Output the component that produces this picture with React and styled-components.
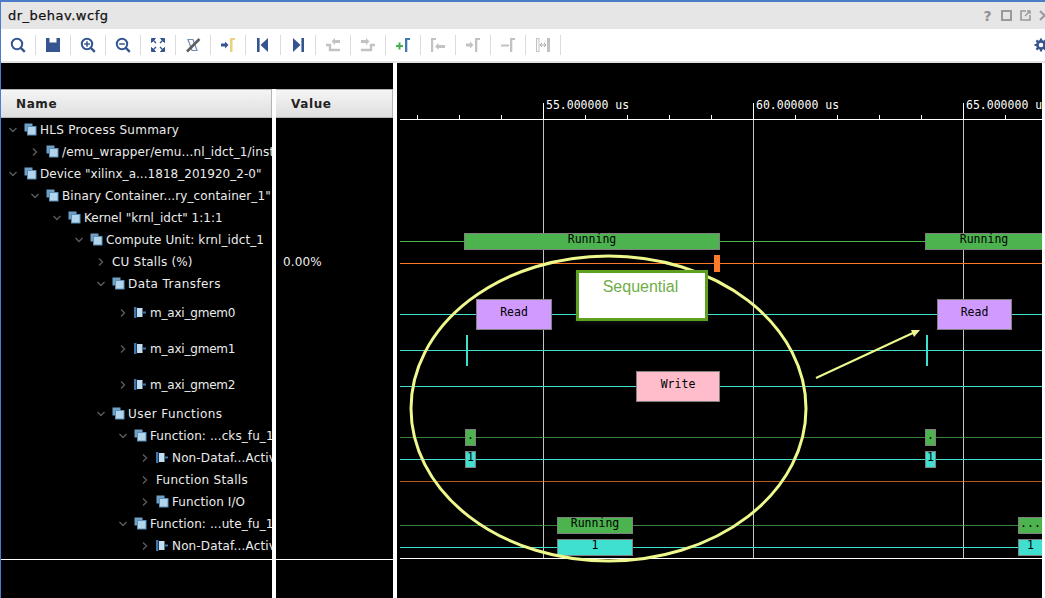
import styled, { createGlobalStyle } from "styled-components";

const GlobalStyle = createGlobalStyle`
  html, body { margin: 0; padding: 0; background: #fff; }
  body { font-family: "DejaVu Sans", sans-serif; }
`;

const blue = "#34558f";
const off = "#c2c2c2";

const Frame = styled.div`
  width: 1045px;
  height: 598px;
  box-sizing: border-box;
  border-top: 2px solid #4a7cc9;
  border-left: 1px solid #4a7cc9;
  background: #fff;
  overflow: hidden;
  display: flex;
  flex-direction: column;
`;

const TitleBar = styled.div`
  height: 27px;
  flex: none;
  background: #e6e6e6;
  display: flex;
  align-items: center;
  justify-content: space-between;
  padding-left: 7px;
`;

const Title = styled.span`
  font-size: 13px;
  letter-spacing: 0.5px;
  color: #111;
  -webkit-text-stroke: 0.25px #111;
`;

const WindowButtons = styled.div`
  display: flex;
  margin-right: -9px;
`;

const WindowButton = styled.div`
  width: 19px;
  height: 19px;
  display: flex;
  align-items: center;
  justify-content: center;
  color: #8f8f8f;
  font-size: 14px;
  font-weight: bold;
`;

const Toolbar = styled.div`
  height: 32px;
  flex: none;
  background: #fff;
  display: flex;
  align-items: center;
  justify-content: space-between;
  border-bottom: 2px solid #e4e4e4;
  box-sizing: content-box;
`;

const ToolGroup = styled.div`
  display: flex;
  align-items: center;
`;

const ToolCell = styled.div`
  width: 35px;
  height: 20px;
  box-sizing: border-box;
  border-right: 1px solid #dcdcdc;
  display: flex;
  align-items: center;
  justify-content: center;
`;

const Gear = styled.svg`
  width: 14px;
  height: 14px;
  margin-right: -3px;
`;

const Body = styled.div`
  flex: 1;
  min-height: 0;
  display: flex;
  gap: 4px;
`;

const LeftPane = styled.div`
  width: 392px;
  flex: none;
  display: flex;
  flex-direction: column;
`;

const BlackStrip = styled.div`
  height: 26px;
  flex: none;
  background: #000;
`;

const Columns = styled.div`
  flex: 1;
  display: grid;
  grid-template-columns: 271px 117px;
  gap: 4px;
`;

const Column = styled.div`
  background: #000;
  display: flex;
  flex-direction: column;
  overflow: hidden;
`;

const ColumnHeader = styled.div`
  height: 29px;
  flex: none;
  box-sizing: border-box;
  padding-left: 15px;
  display: flex;
  align-items: center;
  background: linear-gradient(#f5f5f5, #dedede);
  border: 1px solid #b4b4b4;
  border-left: none;
  font-size: 12px;
  font-weight: bold;
  letter-spacing: 0.6px;
  color: #222;
`;

const Rows = styled.div`
  flex: none;
`;

const TreeRow = styled.div`
  height: ${({ $h }) => $h}px;
  box-sizing: border-box;
  padding-left: ${({ $level }) => 7 + $level * 22}px;
  display: flex;
  align-items: center;
  white-space: nowrap;
  font-size: 12px;
  color: #ececec;
`;

const RowLabel = styled.span`
  padding-top: 2px;
  letter-spacing: ${({ $track }) => $track}px;
`;

const ValueRow = styled.div`
  height: ${({ $h }) => $h}px;
  box-sizing: border-box;
  padding: 2px 0 0 7px;
  display: flex;
  align-items: center;
  font-size: 12px;
  letter-spacing: 0.15px;
  color: #ececec;
`;

const Chevron = styled.svg`
  width: 10px;
  height: 10px;
  flex: none;
  margin-right: 6px;
  margin-top: 2px;
`;

const NodeIcon = styled.svg`
  width: 13px;
  height: 13px;
  flex: none;
  margin-right: 3px;
`;

const FootLine = styled.div`
  margin-top: 3px;
  height: 1px;
  background: #fff;
  flex: none;
`;

const Wave = styled.div`
  position: relative;
  width: 645px;
  flex: none;
  background: #000;
  overflow: hidden;
  font-family: "DejaVu Sans Mono", monospace;
  font-size: 11.5px;
`;

const Ruler = styled.div`
  position: relative;
  height: 57px;
  margin-left: 3px;
  border-bottom: 1px solid #fff;
  box-sizing: border-box;
`;

const Tick = styled.div`
  position: absolute;
  bottom: 0;
  left: ${({ $x }) => $x - 400}px;
  width: 1px;
  height: ${({ $major }) => ($major ? 16 : 4)}px;
  background: #fff;
`;

const TickLabel = styled.span`
  position: absolute;
  top: 35px;
  left: ${({ $x }) => $x - 397}px;
  color: #fff;
  white-space: nowrap;
`;

const GridLine = styled.div`
  position: absolute;
  top: 57px;
  height: 438px;
  left: ${({ $x }) => $x - 397}px;
  width: 1px;
  background: #c4c4c4;
`;

const WaveRow = styled.div`
  position: relative;
  height: ${({ $h }) => $h}px;
`;

const Trace = styled.div`
  position: absolute;
  left: 3px;
  right: 0;
  top: 50%;
  height: 1px;
  background: ${({ $color }) => $color};
  opacity: ${({ $dim }) => ($dim ? 0.72 : 1)};
`;

const Bar = styled.div`
  position: absolute;
  left: ${({ $x }) => $x - 397}px;
  width: ${({ $w }) => $w}px;
  top: 3px;
  bottom: 2px;
  box-sizing: border-box;
  border: 1px solid #808080;
  background: ${({ $color }) => $color};
  color: #000;
  display: flex;
  justify-content: center;
  align-items: center;
  padding-bottom: 5px;
  white-space: nowrap;
`;

const Marker = styled.div`
  position: absolute;
  left: ${({ $x }) => $x - 397}px;
  width: ${({ $w }) => $w}px;
  top: 3px;
  bottom: 2px;
  background: ${({ $color }) => $color};
`;

const BottomLine = styled.div`
  height: 1px;
  margin-left: 3px;
  background: #fff;
  position: relative;
`;

const Overlay = styled.svg`
  position: absolute;
  left: 0;
  top: 0;
  width: 648px;
  height: 535px;
  pointer-events: none;
`;

const Callout = styled.div`
  position: absolute;
  left: 179px;
  top: 207px;
  width: 132px;
  height: 51px;
  box-sizing: border-box;
  border: 3px solid #5ea122;
  background: #fff;
  box-shadow: 0 2px 4px rgba(255, 255, 255, 0.08);
  text-align: center;
  font-family: "Liberation Sans", Arial, sans-serif;
  font-size: 16px;
  line-height: 20px;
  padding-top: 4px;
  padding-right: 3px;
  color: #70ad47;
`;

const Arrow = () => (
  <>
    <rect x="1" y="6.5" width="4" height="3" />
    <polygon points="5,4.5 8.5,8 5,11.5" />
  </>
);

const toolIcons = [
  <g key="search" fill="none" stroke={blue}>
    <circle cx="7" cy="7" r="5.2" strokeWidth="2" />
    <path d="M10.8 10.8L14.8 14.8" strokeWidth="2.4" />
  </g>,
  <path key="save" fill={blue} d="M1 1H4.5V5.5H11.5V1H15V15H1Z" />,
  <g key="in" fill="none" stroke={blue}>
    <circle cx="7" cy="7" r="5.2" strokeWidth="2" />
    <path d="M10.8 10.8L14.8 14.8" strokeWidth="2.4" />
    <path d="M4.2 7H9.8M7 4.2V9.8" strokeWidth="1.5" />
  </g>,
  <g key="out" fill="none" stroke={blue}>
    <circle cx="7" cy="7" r="5.2" strokeWidth="2" />
    <path d="M10.8 10.8L14.8 14.8" strokeWidth="2.4" />
    <path d="M4.2 7H9.8" strokeWidth="1.5" />
  </g>,
  <g key="fit" fill={blue} stroke={blue}>
    <path d="M1.5 1.5H5.5L1.5 5.5Z" />
    <path d="M14.5 1.5H10.5L14.5 5.5Z" />
    <path d="M1.5 14.5H5.5L1.5 10.5Z" />
    <path d="M14.5 14.5H10.5L14.5 10.5Z" />
    <path d="M3 3L6 6M13 3L10 6M3 13L6 10M13 13L10 10" strokeWidth="1.4" />
  </g>,
  <g key="snap" fill="none">
    <path d="M3 2.5H8L12 13.5H7Z" stroke="#6f8db8" strokeWidth="1.2" />
    <path d="M2 14.5L14.5 2" stroke="#5f5f5f" strokeWidth="2.6" />
  </g>,
  <g key="marker">
    <g fill={blue}>
      <Arrow />
    </g>
    <path d="M10 1H15V3H12.5V15H10Z" fill="#eed27a" />
  </g>,
  <g key="first" fill={blue}>
    <rect x="2" y="1" width="2.6" height="14" />
    <polygon points="13,1 13,15 5.5,8" />
  </g>,
  <g key="last" fill={blue}>
    <polygon points="3,1 3,15 10.5,8" />
    <rect x="11.4" y="1" width="2.6" height="14" />
  </g>,
  <g key="prevt" fill={off}>
    <path d="M1 8H5V13H15" fill="none" stroke={off} strokeWidth="2.4" />
    <rect x="10" y="3" width="5" height="3" />
    <polygon points="10,1 10,8 6.5,4.5" />
  </g>,
  <g key="nextt" fill={off}>
    <path d="M1 13H11V8H15" fill="none" stroke={off} strokeWidth="2.4" />
    <rect x="1" y="3" width="5" height="3" />
    <polygon points="6,1 6,8 9.5,4.5" />
  </g>,
  <g key="add">
    <path d="M1 9H8M4.5 5.5V12.5" fill="none" stroke="#45b04a" strokeWidth="2" />
    <path d="M10 1H15V3H12.3V15H10Z" fill="#3d7ab0" />
  </g>,
  <g key="prevm" fill={off}>
    <path d="M1 1H6V3H3.2V15H1Z" />
    <polygon points="5,9.5 8.5,6 8.5,8 15,8 15,11 8.5,11 8.5,13" />
  </g>,
  <g key="nextm" fill={off}>
    <Arrow />
    <path d="M10 1H15V3H12.3V15H10Z" />
  </g>,
  <g key="delm" fill={off}>
    <rect x="1" y="7.5" width="8" height="2" />
    <path d="M10 1H15V3H12.3V15H10Z" />
  </g>,
  <g key="span" fill={off}>
    <rect x="1.5" y="1.5" width="2.5" height="13" fill="none" stroke={off} />
    <rect x="12" y="1" width="3" height="14" />
    <path d="M5 8H11" stroke="#aaa" />
    <path d="M7 6L5 8L7 10M9 6L11 8L9 10" fill="none" stroke="#aaa" />
  </g>,
];

const GroupIcon = () => (
  <NodeIcon viewBox="0 0 13 13">
    <rect x="0.5" y="0.5" width="8" height="8" fill="#6f9fc4" />
    <rect x="3.5" y="3.5" width="8.5" height="8.5" fill="#b3d5ec" stroke="#5b8fb8" strokeWidth="1" />
  </NodeIcon>
);

const SignalIcon = () => (
  <NodeIcon viewBox="0 0 13 13">
    <rect x="0" y="1" width="2.5" height="11" fill="#3f75ad" />
    <rect x="3" y="2" width="5.5" height="9" fill="#c3def0" />
    <rect x="8.5" y="5.5" width="3.5" height="2" fill="#3f75ad" />
  </NodeIcon>
);

const ChevronIcon = ({ open }) => (
  <Chevron viewBox="0 0 10 10">
    <path
      d={open ? "M1.5 3L5 6.5L8.5 3" : "M3 1.5L6.5 5L3 8.5"}
      fill="none"
      stroke="#5a5a5a"
      strokeWidth="1.4"
    />
  </Chevron>
);

// track: the reference font has whole-pixel advances, so each label gets its own spacing
const tree = [
  { level: 0, open: true, icon: "group", track: 0.25, label: "HLS Process Summary" },
  { level: 1, icon: "group", track: 0.15, label: "/emu_wrapper/emu...nl_idct_1/inst" },
  { level: 0, open: true, icon: "group", track: 0.03, label: 'Device "xilinx_a...1818_201920_2-0"' },
  { level: 1, open: true, icon: "group", track: 0.1, label: 'Binary Container...ry_container_1"' },
  { level: 2, open: true, icon: "group", track: 0.02, label: 'Kernel "krnl_idct" 1:1:1' },
  { level: 3, open: true, icon: "group", track: 0.11, label: "Compute Unit: krnl_idct_1" },
  { level: 4, track: 0.2, label: "CU Stalls (%)", value: "0.00%" },
  { level: 4, open: true, icon: "group", track: 0.42, label: "Data Transfers" },
  { level: 5, h: 36, icon: "signal", track: -0.2, label: "m_axi_gmem0" },
  { level: 5, h: 36, icon: "signal", track: -0.2, label: "m_axi_gmem1" },
  { level: 5, h: 36, icon: "signal", track: -0.2, label: "m_axi_gmem2" },
  { level: 4, open: true, icon: "group", track: 0.42, label: "User Functions" },
  { level: 5, open: true, icon: "group", track: 0.1, label: "Function: ...cks_fu_1" },
  { level: 6, icon: "signal", track: 0.15, label: "Non-Dataf...Active" },
  { level: 6, track: 0.3, label: "Function Stalls" },
  { level: 6, icon: "group", track: 0.1, label: "Function I/O" },
  { level: 5, open: true, icon: "group", track: 0.1, label: "Function: ...ute_fu_1" },
  { level: 6, icon: "signal", track: 0.15, label: "Non-Dataf...Active" },
];

const green = "#4cb34f";
const cyan = "#40e0d0";
const orange = "#ff7a28";
const purple = "#d09aff";
const pink = "#ffbccb";

const waveRows = [
  {}, {}, {}, {}, {},
  {
    trace: green,
    bars: [
      { x: 464, w: 256, color: green, text: "Running" },
      { x: 925, w: 118, color: green, text: "Running" },
    ],
  },
  { trace: orange, marks: [{ x: 714, w: 6, color: orange }] },
  {},
  {
    h: 36,
    trace: cyan,
    bars: [
      { x: 476, w: 76, color: purple, text: "Read" },
      { x: 937, w: 75, color: purple, text: "Read" },
    ],
  },
  {
    h: 36,
    trace: cyan,
    marks: [
      { x: 466, w: 2, color: cyan },
      { x: 926, w: 2, color: cyan },
    ],
  },
  { h: 36, trace: cyan, bars: [{ x: 636, w: 84, color: pink, text: "Write" }] },
  {},
  {
    trace: green,
    dim: true,
    bars: [
      { x: 465, w: 11, color: green, text: "." },
      { x: 925, w: 11, color: green, text: "." },
    ],
  },
  {
    trace: cyan,
    bars: [
      { x: 465, w: 11, color: cyan, text: "1" },
      { x: 925, w: 11, color: cyan, text: "1" },
    ],
  },
  { trace: orange, dim: true },
  {},
  {
    trace: green,
    dim: true,
    bars: [
      { x: 557, w: 76, color: green, text: "Running" },
      { x: 1018, w: 25, color: green, text: "..." },
    ],
  },
  {
    trace: cyan,
    bars: [
      { x: 557, w: 76, color: cyan, text: "1" },
      { x: 1018, w: 25, color: cyan, text: "1" },
    ],
  },
];

const minorTicks = [417, 459, 501, 585, 627, 669, 711, 795, 837, 879, 921, 1005];
const majors = [
  { x: 543, label: "55.000000 us" },
  { x: 753, label: "60.000000 us" },
  { x: 963, label: "65.000000 us" },
];

const App = () => (
  <Frame>
    <GlobalStyle />
    <TitleBar>
      <Title>dr_behav.wcfg</Title>
      <WindowButtons>
        <WindowButton>?</WindowButton>
        <WindowButton>
          <svg width="11" height="11" viewBox="0 0 11 11">
            <rect x="1" y="1" width="9" height="9" fill="none" stroke="#9a9a9a" strokeWidth="2" />
          </svg>
        </WindowButton>
        <WindowButton>
          <svg width="11" height="11" viewBox="0 0 11 11">
            <path d="M6 1H1V10H10V5" fill="none" stroke="#9a9a9a" strokeWidth="1.6" />
            <path d="M5 6L10 1M7 1H10V4" fill="none" stroke="#9a9a9a" strokeWidth="1.4" />
          </svg>
        </WindowButton>
        <WindowButton>
          <svg width="11" height="11" viewBox="0 0 11 11">
            <path d="M1 1L10 10M10 1L1 10" fill="none" stroke="#9a9a9a" strokeWidth="2" />
          </svg>
        </WindowButton>
      </WindowButtons>
    </TitleBar>

    <Toolbar>
      <ToolGroup>
        {toolIcons.map((icon, i) => (
          <ToolCell key={i}>
            <svg width="16" height="16" viewBox="0 0 16 16">
              {icon}
            </svg>
          </ToolCell>
        ))}
      </ToolGroup>
      <Gear viewBox="0 0 14 14">
        <circle cx="7" cy="7" r="3.6" fill="none" stroke={blue} strokeWidth="2.6" />
        <path
          d="M7 0.5V3M7 11V13.5M0.5 7H3M11 7H13.5M2.4 2.4L4 4M10 10L11.6 11.6M2.4 11.6L4 10M10 4L11.6 2.4"
          stroke={blue}
          strokeWidth="2.2"
        />
      </Gear>
    </Toolbar>

    <Body>
      <LeftPane>
        <BlackStrip />
        <Columns>
          <Column>
            <ColumnHeader>Name</ColumnHeader>
            <Rows>
              {tree.map((row, i) => (
                <TreeRow key={i} $h={row.h || 22} $level={row.level}>
                  <ChevronIcon open={row.open} />
                  {row.icon === "group" && <GroupIcon />}
                  {row.icon === "signal" && <SignalIcon />}
                  <RowLabel $track={row.track}>{row.label}</RowLabel>
                </TreeRow>
              ))}
            </Rows>
            <FootLine />
          </Column>
          <Column>
            <ColumnHeader>Value</ColumnHeader>
            <Rows>
              {tree.map((row, i) => (
                <ValueRow key={i} $h={row.h || 22}>
                  {row.value}
                </ValueRow>
              ))}
            </Rows>
            <FootLine />
          </Column>
        </Columns>
      </LeftPane>

      <Wave>
        <Ruler>
          {minorTicks.map((x) => (
            <Tick key={x} $x={x} />
          ))}
          {majors.map((m) => (
            <Tick key={m.x} $x={m.x} $major />
          ))}
        </Ruler>
        {majors.map((m) => (
          <TickLabel key={m.x} $x={m.x + 3}>
            {m.label}
          </TickLabel>
        ))}
        {majors.map((m) => (
          <GridLine key={m.x} $x={m.x} />
        ))}
        {waveRows.map((row, i) => (
          <WaveRow key={i} $h={row.h || 22}>
            {row.trace && <Trace $color={row.trace} $dim={row.dim} />}
            {(row.marks || []).map((m) => (
              <Marker key={m.x} $x={m.x} $w={m.w} $color={m.color} />
            ))}
            {(row.bars || []).map((b) => (
              <Bar key={b.x} $x={b.x} $w={b.w} $color={b.color}>
                {b.text}
              </Bar>
            ))}
          </WaveRow>
        ))}
        <BottomLine />
        <Overlay viewBox="397 63 648 535">
          <ellipse cx="608.5" cy="408.5" rx="197.5" ry="152.5" fill="none" stroke="#eef88c" strokeWidth="3" />
          <path d="M816 378L915 332" stroke="#eef88c" strokeWidth="2" />
          <polygon points="920,330 911,330 914,337" fill="#eef88c" />
        </Overlay>
        <Callout>Sequential</Callout>
      </Wave>
    </Body>
  </Frame>
);

export default App;
